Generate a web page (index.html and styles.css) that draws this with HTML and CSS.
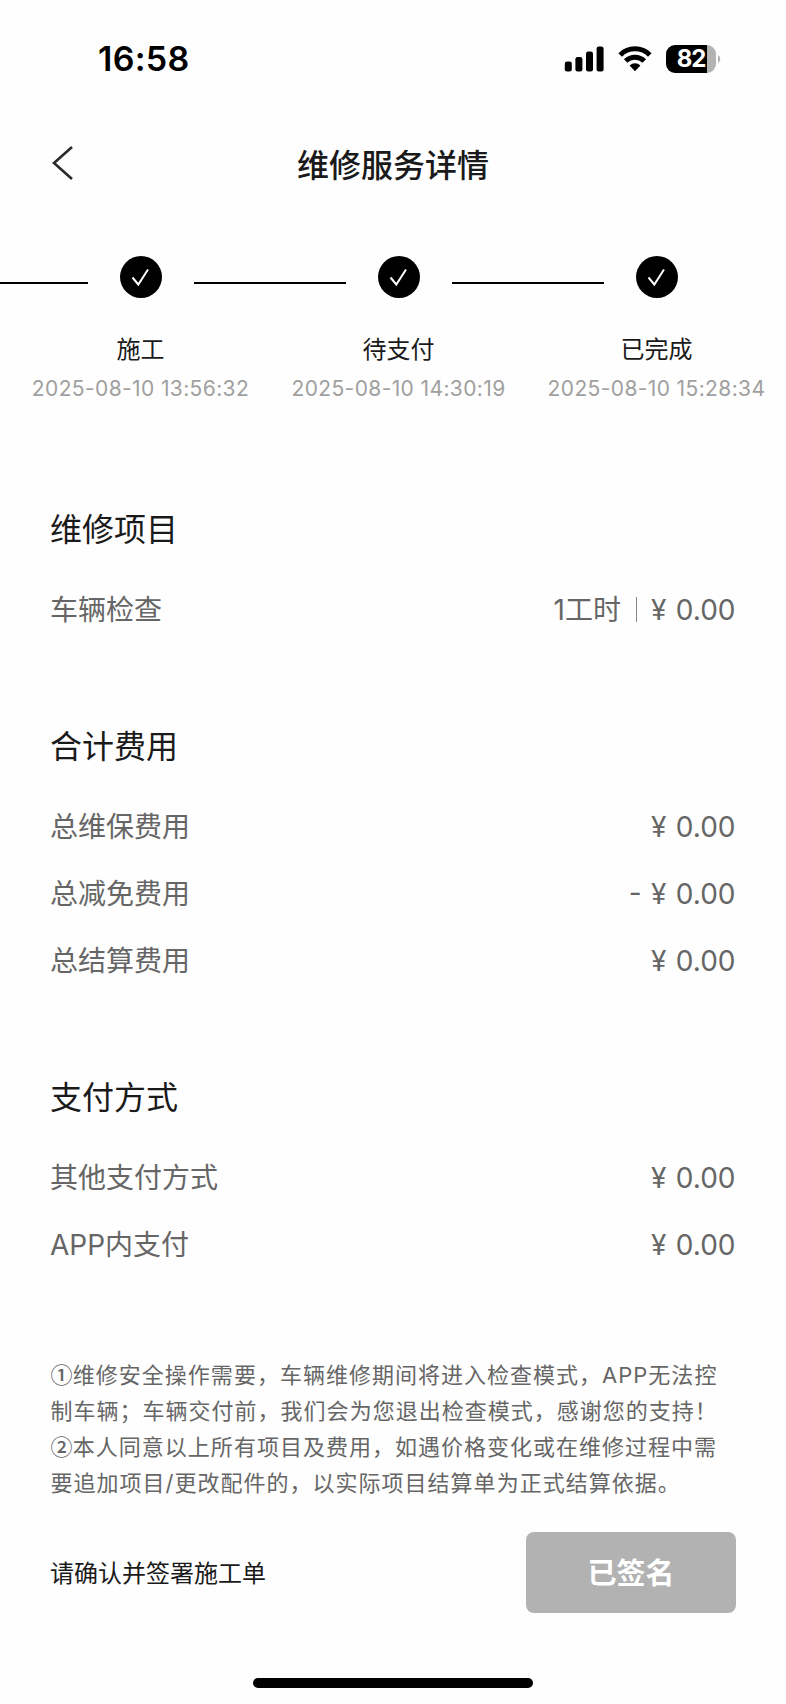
FILE: index.html
```html
<!DOCTYPE html>
<html lang="zh-CN">
<head>
<meta charset="utf-8">
<title>维修服务详情</title>
<link rel="stylesheet" href="styles.css">
</head>
<body>
<div class="screen">
  <div class="status">
    <div class="time">16:58</div>
    <div class="indicators">
      <svg class="signal" width="40" height="26" viewBox="0 0 40 26"><rect x="0.8" y="15.5" width="7" height="10" rx="2.2"/><rect x="11.4" y="11" width="7" height="14.5" rx="2.2"/><rect x="22" y="5.5" width="7" height="20" rx="2.2"/><rect x="32.6" y="0.5" width="7" height="25" rx="2.2"/></svg>
      <svg class="wifi" width="34" height="26" viewBox="0 0 34 26"><g fill="none" stroke="#000" stroke-width="5"><path d="M2.2 8.9a21 21 0 0 1 29.6 0"/><path d="M7.7 15a13.2 13.2 0 0 1 18.6 0"/></g><path d="M11.6 19.5a7.8 7.8 0 0 1 10.8 0L17 25.3z"/></svg>
      <div class="battery"><span class="level">82</span></div>
      <svg class="cap" width="4" height="8" viewBox="0 0 4 8"><path d="M0 0a4.6 4.6 0 0 1 0 8z" fill="#b3b3b3"/></svg>
    </div>
  </div>
  <header class="nav">
    <svg class="back" width="22" height="34" viewBox="0 0 22 34"><path d="M20 1 2 17l18 16" fill="none" stroke="#2a2a2a" stroke-width="2.6"/></svg>
    <h1 class="title">维修服务详情</h1>
  </header>
  <div class="steps">
    <div class="step">
      <div class="track"><i class="line first"></i><svg class="dot" width="42" height="42" viewBox="0 0 42 42"><circle cx="21" cy="21" r="21"/><path d="m12.5 21.5 5.8 7L28 13.5"/></svg><i class="line"></i></div>
      <div class="name">施工</div><div class="date">2025-08-10 13:56:32</div>
    </div>
    <div class="step">
      <div class="track"><i class="line"></i><svg class="dot" width="42" height="42" viewBox="0 0 42 42"><circle cx="21" cy="21" r="21"/><path d="m12.5 21.5 5.8 7L28 13.5"/></svg><i class="line"></i></div>
      <div class="name">待支付</div><div class="date">2025-08-10 14:30:19</div>
    </div>
    <div class="step">
      <div class="track"><i class="line"></i><svg class="dot" width="42" height="42" viewBox="0 0 42 42"><circle cx="21" cy="21" r="21"/><path d="m12.5 21.5 5.8 7L28 13.5"/></svg><i class="line none"></i></div>
      <div class="name">已完成</div><div class="date">2025-08-10 15:28:34</div>
    </div>
  </div>
  <section class="group">
    <h2 class="heading">维修项目</h2>
    <div class="row"><span>车辆检查</span><span class="value"><span class="hours">1工时</span><i class="sep"></i><span class="amount">¥ 0.00</span></span></div>
  </section>
  <section class="group">
    <h2 class="heading">合计费用</h2>
    <div class="row"><span>总维保费用</span><span class="amount">¥ 0.00</span></div>
    <div class="row"><span>总减免费用</span><span class="amount">- ¥ 0.00</span></div>
    <div class="row"><span>总结算费用</span><span class="amount">¥ 0.00</span></div>
  </section>
  <section class="group">
    <h2 class="heading">支付方式</h2>
    <div class="row"><span>其他支付方式</span><span class="amount">¥ 0.00</span></div>
    <div class="row"><span>APP内支付</span><span class="amount">¥ 0.00</span></div>
  </section>
  <p class="notes"><span class="num">①</span>维修安全操作需要，车辆维修期间将进入检查模式，<span class="latin">APP</span>无法控<br>制车辆；车辆交付前，我们会为您退出检查模式，感谢您的支持！<br><span class="num">②</span>本人同意以上所有项目及费用，如遇价格变化或在维修过程中需<br>要追加项目/更改配件的，以实际项目结算单为正式结算依据。</p>
  <footer class="sign"><span class="hint">请确认并签署施工单</span><button class="signed">已签名</button></footer>
  <div class="home"></div>
</div>
</body>
</html>
```
FILE: styles.css
```css
* { box-sizing: border-box; }
body { margin: 0; background: #fefefe; font-family: Inter, "Noto Sans CJK SC", sans-serif; color: #1a1a1a; }
.screen { width: 786px; height: 1704px; overflow: hidden; display: flex; flex-direction: column; background: #fefefe; }
.status { height: 118px; flex: none; display: flex; justify-content: space-between; align-items: center; padding: 0 64px 0 98px; }
.time { font-size: 34px; line-height: 40px; font-weight: 600; color: #000; letter-spacing: 0.3px; }
.indicators { display: flex; align-items: center; margin-top: -1px; }
.wifi { margin-left: 14px; }
.battery { width: 50px; height: 28px; margin-left: 14px; border-radius: 9px; background: linear-gradient(to right, #000 0 41.5px, #b3b3b3 41.5px); text-align: center; }
.level { display: block; font-size: 24px; line-height: 28px; font-weight: 700; color: #fff; letter-spacing: -1.2px; }
.cap { margin-left: 2px; }
.nav { height: 94px; flex: none; display: grid; grid-template-columns: 74px 1fr 74px; align-items: center; }
.back { margin: -5px 0 0 52px; }
.title { margin: 1px 0 0; font-size: 32px; line-height: 48px; font-weight: 500; text-align: center; }
.steps { height: 244px; flex: none; display: grid; grid-template-columns: repeat(3, 258px); margin-left: 11.5px; padding-top: 44px; }
.step { display: flex; flex-direction: column; align-items: center; }
.track { width: 258px; height: 42px; display: flex; align-items: center; justify-content: space-between; }
.line { width: 76px; height: 2px; margin-top: 11px; background: #000; }
.first { width: 88px; margin-left: -12px; }
.none { visibility: hidden; }
.dot path { fill: none; stroke: #fff; stroke-width: 2; }
.name { margin-top: 34px; font-size: 24px; line-height: 36px; white-space: nowrap; }
.date { margin-top: 7px; font-size: 21px; line-height: 28px; letter-spacing: 0.38px; color: #a0a0a0; white-space: nowrap; }
.group { flex: none; padding: 50px 50.5px 0 50px; margin-bottom: 30px; }
.heading { margin: 0 0 22px; font-size: 32px; line-height: 48px; font-weight: 400; }
.row { height: 67px; display: flex; align-items: center; justify-content: space-between; font-size: 28px; line-height: 40px; color: #666; }
.value { display: flex; align-items: center; }
.sep { width: 1px; height: 25px; margin: 0 14px 0 15px; background: #888; }
.amount { word-spacing: 1.6px; }
.notes { flex: none; margin: 49px 0 0 50.5px; font-size: 22px; line-height: 36px; letter-spacing: 1.01px; color: #666; white-space: nowrap; }
.num { font-family: "Noto Sans CJK SC", sans-serif; font-weight: 500; line-height: 1; letter-spacing: 0.3px; }
.sign { height: 81px; flex: none; margin: 31px 50px 0 50px; display: flex; align-items: center; justify-content: space-between; }
.hint { margin-top: -2px; font-size: 24px; }
.signed { width: 210px; height: 81px; padding: 3px 0 0; border: 0; border-radius: 8px; background: #b2b2b2; color: #fff; font: 600 29px/40px Inter, "Noto Sans CJK SC", sans-serif; }
.home { width: 280px; height: 10px; flex: none; margin: 65px auto 0; border-radius: 5px; background: #000; }
```
